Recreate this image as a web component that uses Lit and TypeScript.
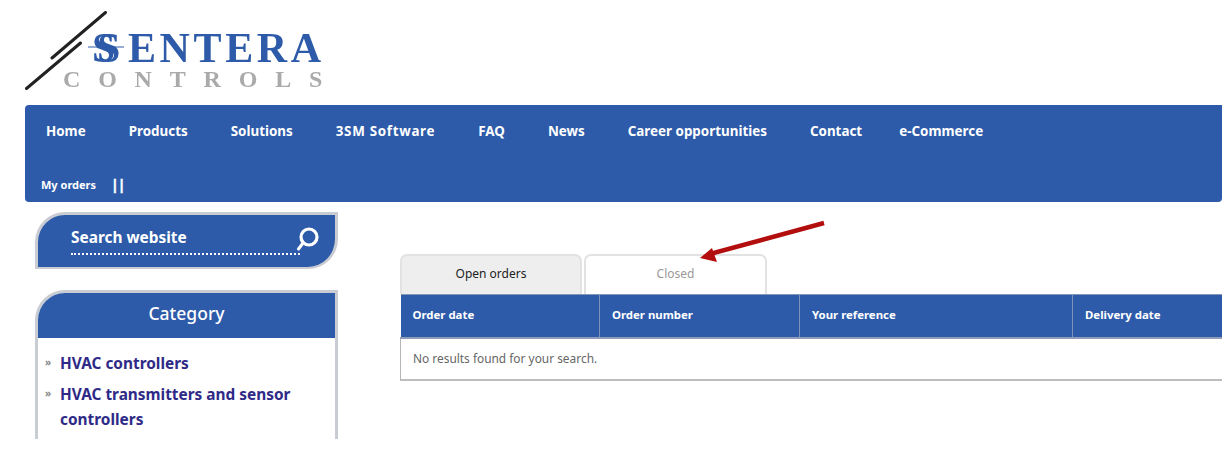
import { LitElement, html, css } from "lit";
import { customElement } from "lit/decorators.js";

@customElement("app-root")
export class AppRoot extends LitElement {
  static styles = css`
    :host { display: block; width: 1227px; height: 457px; overflow: hidden; background: #fff; position: relative; font-family: "Noto Sans", sans-serif; }
    .logo { height: 105px; position: relative; box-sizing: border-box; padding: 29px 0 0 92px; filter: blur(0.4px); }
    .logo svg { position: absolute; left: 0; top: 0; }
    .brand { font: bold 42px/38px "Liberation Serif", serif; letter-spacing: 3.6px; color: #2d5ba9; height: 38px; white-space: nowrap; }
    .brand span { display: inline-block; width: 36px; letter-spacing: 0; text-shadow: 5px 0 0 #2d5ba9; }
    .sub { font: bold 24px/24px "Liberation Serif", serif; letter-spacing: 17.8px; color: #aaaaaa; margin-left: -29px; white-space: nowrap; }
    nav { margin: 0 5px 0 25px; height: 97px; background: #2d5ba9; border-radius: 4px 0 4px 4px; color: #fff; font-weight: 700; box-sizing: border-box; padding: 0 0 0 21px; }
    .r1 { display: flex; gap: 43px; height: 52px; align-items: center; font-size: 13.4px; }
    .r1 .wide { letter-spacing: 0.7px; }
    .r1 .last { margin-left: -6px; }
    .r2 { display: flex; align-items: center; height: 55px; font-size: 11px; margin-left: -5px; gap: 15px; }
    .bars { font-size: 14px; letter-spacing: -1px; -webkit-text-stroke: 0.5px #fff; }
    .content { display: flex; align-items: flex-start; padding-top: 10px; }
    aside { width: 303px; margin-left: 35px; flex: none; }
    .search { box-sizing: border-box; height: 57px; background: #2d5ba9; border: 3px solid #c9ccd2; border-bottom-width: 2px; border-radius: 30px 0 30px 0; display: flex; align-items: flex-start; padding: 12px 0 0 33px; color: #fff; font-weight: 700; font-size: 15.4px; }
    .field { width: 229px; height: 28px; border-bottom: 2px dotted #fff; box-sizing: border-box; line-height: 22px; }
    .search svg { margin: -1px 0 0 -3px; }
    .cat { margin-top: 21px; box-sizing: border-box; height: 149px; border: 3px solid #c9ccd2; border-width: 3px 3px 0 3px; border-radius: 30px 0 0 0; }
    .cat h2 { margin: 0; height: 45px; background: #2d5ba9; border-radius: 27px 0 0 0; color: #fff; font-size: 17.5px; font-weight: 500; text-align: center; line-height: 40px; }
    .cat ul { list-style: none; margin: 0; padding: 13px 0 0 7px; color: #2f2a87; font-weight: 700; font-size: 15.4px; line-height: 25px; }
    .cat li { display: flex; gap: 7px; margin-bottom: 6px; width: 262px; }
    .cat i { font-style: normal; color: #888; font-size: 10px; font-weight: 700; flex: none; width: 8px; line-height: 22px; }
    main { margin-left: 62px; width: 822px; padding-top: 42px; }
    .tabs { display: flex; gap: 2px; height: 40px; font-size: 12px; }
    .tab { width: 183px; box-sizing: border-box; border: 2px solid #e2e2e2; border-bottom: 0; border-radius: 7px 7px 0 0; text-align: center; line-height: 36px; color: #999; background: #fff; }
    .tab.on { width: 182px; background: #eeeeee; color: #222; }
    table { width: 822px; border-collapse: collapse; table-layout: fixed; font-size: 11.4px; }
    th { background: #2d5ba9; color: #fff; text-align: left; font-weight: 700; height: 43px; padding: 0 0 2px 12px; box-sizing: border-box; border-right: 1px solid #7d93bb; border-top: 1px solid #8496b8; border-bottom: 2px solid #8f9db8; }
    th:last-child { border-right: 0; }
    td { height: 42px; padding: 0 0 2px 12px; color: #666; box-sizing: border-box; border-left: 1px solid #b5b5b5; border-bottom: 2px solid #bdbdbd; font-size: 11.9px; }
    .arrow { position: absolute; left: 690px; top: 215px; }
  `;
  render() {
    return html`
      <div class="logo">
        <svg width="130" height="100"><g stroke="#222" stroke-width="3" stroke-linecap="round"><line x1="105.500" y1="12.500" x2="52" y2="58"/><line x1="80.500" y1="43" x2="26.500" y2="88.500"/></g><line x1="88" y1="47" x2="124" y2="47" stroke="#2d5ba9" stroke-width="1"/></svg>
        <div class="brand"><span>S</span>ENTERA</div>
        <div class="sub">CONTROLS</div>
      </div>
      <nav>
        <div class="r1"><span>Home</span><span>Products</span><span>Solutions</span><span class="wide">3SM Software</span><span>FAQ</span><span>News</span><span>Career opportunities</span><span>Contact</span><span class="last">e-Commerce</span></div>
        <div class="r2"><span>My orders</span><span class="bars">||</span></div>
      </nav>
      <div class="content">
        <aside>
          <div class="search"><div class="field">Search website</div>
            <svg width="26" height="26" viewBox="0 0 26 26" fill="none" stroke="#fff"><circle cx="12" cy="11" r="8" stroke-width="3.200"/><line x1="6" y1="17" x2="1.500" y2="23" stroke-width="3" stroke-linecap="round"/></svg>
          </div>
          <div class="cat">
            <h2>Category</h2>
            <ul>
              <li><i>»</i><span>HVAC controllers</span></li>
              <li><i>»</i><span>HVAC transmitters and sensor controllers</span></li>
            </ul>
          </div>
        </aside>
        <main>
          <div class="tabs"><div class="tab on">Open orders</div><div class="tab">Closed</div></div>
          <table>
            <colgroup><col style="width:199px"/><col style="width:200px"/><col style="width:273px"/><col/></colgroup>
            <tr><th>Order date</th><th>Order number</th><th>Your reference</th><th>Delivery date</th></tr>
            <tr><td colspan="4">No results found for your search.</td></tr>
          </table>
        </main>
      </div>
      <svg class="arrow" width="140" height="50"><line x1="134" y1="8" x2="20" y2="39" stroke="#b30e0e" stroke-width="4.500"/><polygon points="10,43 22,33 27,47" fill="#b30e0e"/></svg>
    `;
  }
}
